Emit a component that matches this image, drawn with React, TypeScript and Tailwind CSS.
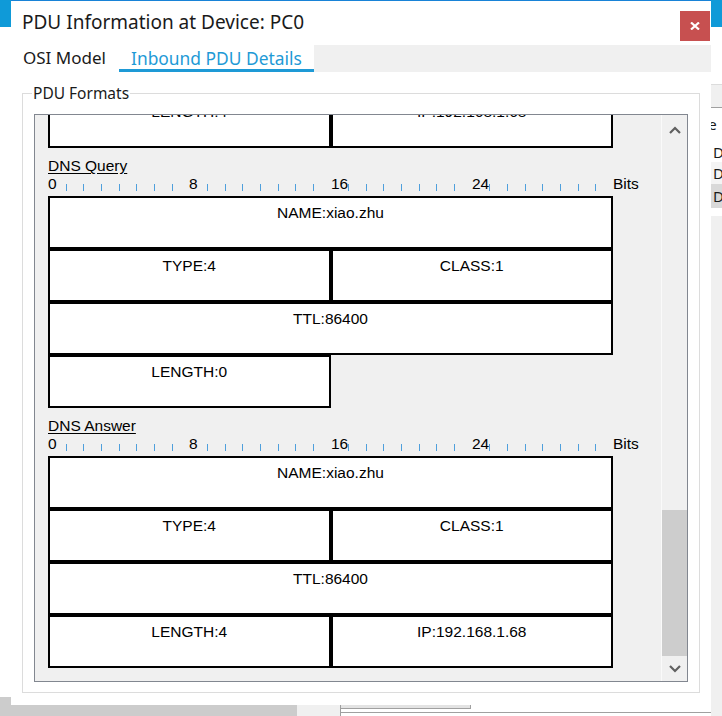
import React from "react";

type Cell = { text: string; full?: boolean };

const TICK = 565 / 32;

const prevRow: Cell[] = [{ text: "LENGTH:4" }, { text: "IP:192.168.1.68" }];

const sections: { title: string; rows: Cell[] }[] = [
  {
    title: "DNS Query",
    rows: [
      { text: "NAME:xiao.zhu", full: true },
      { text: "TYPE:4" },
      { text: "CLASS:1" },
      { text: "TTL:86400", full: true },
      { text: "LENGTH:0" },
    ],
  },
  {
    title: "DNS Answer",
    rows: [
      { text: "NAME:xiao.zhu", full: true },
      { text: "TYPE:4" },
      { text: "CLASS:1" },
      { text: "TTL:86400", full: true },
      { text: "LENGTH:4" },
      { text: "IP:192.168.1.68" },
    ],
  },
];

const rulerLabels: Record<number, string> = { 0: "0", 8: "8", 16: "16", 24: "24", 32: "Bits" };

function Ruler() {
  return (
    <div className="relative h-[21px] w-[600px]">
      {Array.from({ length: 33 }, (_, i) =>
        rulerLabels[i] ? (
          <span key={i} className="absolute top-0 leading-[17px]" style={{ left: Math.round(i * TICK) }}>
            {rulerLabels[i]}
          </span>
        ) : (
          <span
            key={i}
            className="absolute top-[9px] h-[7px] w-px bg-[#4f9fdc]"
            style={{ left: Math.round(i * TICK) }}
          />
        )
      )}
    </div>
  );
}

function FieldGrid({ cells }: { cells: Cell[] }) {
  return (
    <div className="grid w-[565px] grid-cols-2">
      {cells.map((c, i) => (
        <div
          key={i}
          className={`h-[53px] border-2 border-black bg-white pt-[6px] text-center leading-[17px] ${c.full ? "col-span-2" : ""}`}
        >
          {c.text}
        </div>
      ))}
    </div>
  );
}

function Chevron({ up }: { up?: boolean }) {
  return (
    <svg width="12" height="8" viewBox="0 0 12 8">
      <polyline
        points={up ? "1,7 6,2 11,7" : "1,1 6,6 11,1"}
        fill="none"
        stroke="#606060"
        strokeWidth="2.2"
      />
    </svg>
  );
}

export default function App() {
  return (
    <div className="relative h-[716px] w-[722px] overflow-hidden bg-white font-['Noto_Sans',sans-serif] text-[#1a1a1a]">
      {/* windows behind */}
      <div className="absolute left-0 top-0 h-[27px] w-[11px] bg-[#0f9ad8]" />
      <div className="absolute left-0 top-[697px] h-[19px] w-[11px] bg-[#cccccc]" />
      <div className="absolute left-0 top-[705px] h-[11px] w-[297px] bg-[#cccccc]" />
      <div className="absolute left-[297px] top-[705px] h-[11px] w-[43px] bg-[#f0f0f0]" />
      <div className="absolute left-[340px] top-[700px] h-[16px] w-[382px] border-l border-t border-[#a0a0a0]" />
      <div className="absolute left-[341px] top-[705px] h-[4px] w-[130px] border-b border-r border-[#a0a0a0] bg-[#e3e3e3]" />
      <div className="absolute left-[341px] top-[712px] h-px w-[381px] bg-[#a0a0a0]" />

      <div className="absolute right-0 top-0 flex h-[716px] w-[11px] flex-col overflow-hidden">
        <div className="h-[27px] shrink-0 bg-[#0f9ad8]" />
        <div className="h-[57px] shrink-0" />
        <div className="h-[24px] shrink-0 border-b border-t border-b-[#a0a0a0] border-t-[#dcdcdc] bg-[#f0f0f0]" />
        <div className="-ml-[12px] h-[34px] w-[40px] shrink-0 pt-[6px] text-[15px] leading-[20px]">pe</div>
        <div className="h-[20px] shrink-0 pl-[2px] text-[15px] leading-[20px]">D</div>
        <div className="h-[22px] shrink-0 bg-[#f4f4f4] pl-[2px] text-[15px] leading-[22px]">D</div>
        <div className="h-[24px] shrink-0 bg-[#d9d9d9] pl-[2px] text-[15px] leading-[24px]">D</div>
        <div className="h-[8px] shrink-0" />
        <div className="flex-1 bg-[#f0f0f0]" />
      </div>

      {/* main window */}
      <div className="absolute left-[11px] top-0 flex h-[705px] w-[700px] flex-col border-t border-[#1883d7] bg-white">
        <div className="flex h-[44px] shrink-0 items-start justify-between">
          <div className="pl-[11px] pt-[8px] text-[19px] leading-[26px]">PDU Information at Device: PC0</div>
          <button className="mr-[1px] mt-[10px] flex h-[30px] w-[30px] items-center justify-center bg-[#c75050]">
            <svg width="10" height="8" viewBox="0 0 10 8">
              <path d="M1 0.5 L9 7.5 M9 0.5 L1 7.5" stroke="white" strokeWidth="2.2" />
            </svg>
          </button>
        </div>

        <div className="flex h-[27px] shrink-0 text-[17px] leading-[22px]">
          <div className="w-[108px] pl-[12px] pt-[2px]">OSI Model</div>
          <div className="flex w-[195px] flex-col">
            <div className="flex-1 pl-[12px] pt-[2px] text-[17.4px] text-[#1e9ad6]">Inbound PDU Details</div>
            <div className="h-[4px] bg-[#1e9ad6]" />
          </div>
          <div className="flex-1 bg-[#f0f0f0]" />
        </div>

        <div className="relative ml-[11px] mt-[21px] flex h-[600px] w-[678px] shrink-0 flex-col border border-[#dcdcdc] px-[11px] pb-[10px] pt-[20px]">
          <span className="absolute left-[9px] top-[-11px] bg-white px-px text-[15.5px] leading-[20px]">PDU Formats</span>

          <div className="flex flex-1 border border-[#828790] bg-[#f0f0f0]">
            <div className="flex-1 overflow-hidden pl-[13px] font-['Liberation_Sans',Arial,sans-serif] text-[15.5px] text-black">
              <div className="-mt-[20px]">
                <FieldGrid cells={prevRow} />
              </div>
              {sections.map((s) => (
                <div key={s.title} className="mt-[9px]">
                  <div className="h-[18px] leading-[18px] underline underline-offset-[2px]">{s.title}</div>
                  <Ruler />
                  <FieldGrid cells={s.rows} />
                </div>
              ))}
            </div>

            <div className="flex w-[26px] flex-col border-l border-[#fafafa] bg-[#f0f0f0]">
              <div className="flex h-[30px] items-center justify-center">
                <Chevron up />
              </div>
              <div className="flex-1" />
              <div className="h-[146px] bg-[#cdcdcd]" />
              <div className="flex h-[25px] items-center justify-center">
                <Chevron />
              </div>
            </div>
          </div>
        </div>
      </div>
    </div>
  );
}
